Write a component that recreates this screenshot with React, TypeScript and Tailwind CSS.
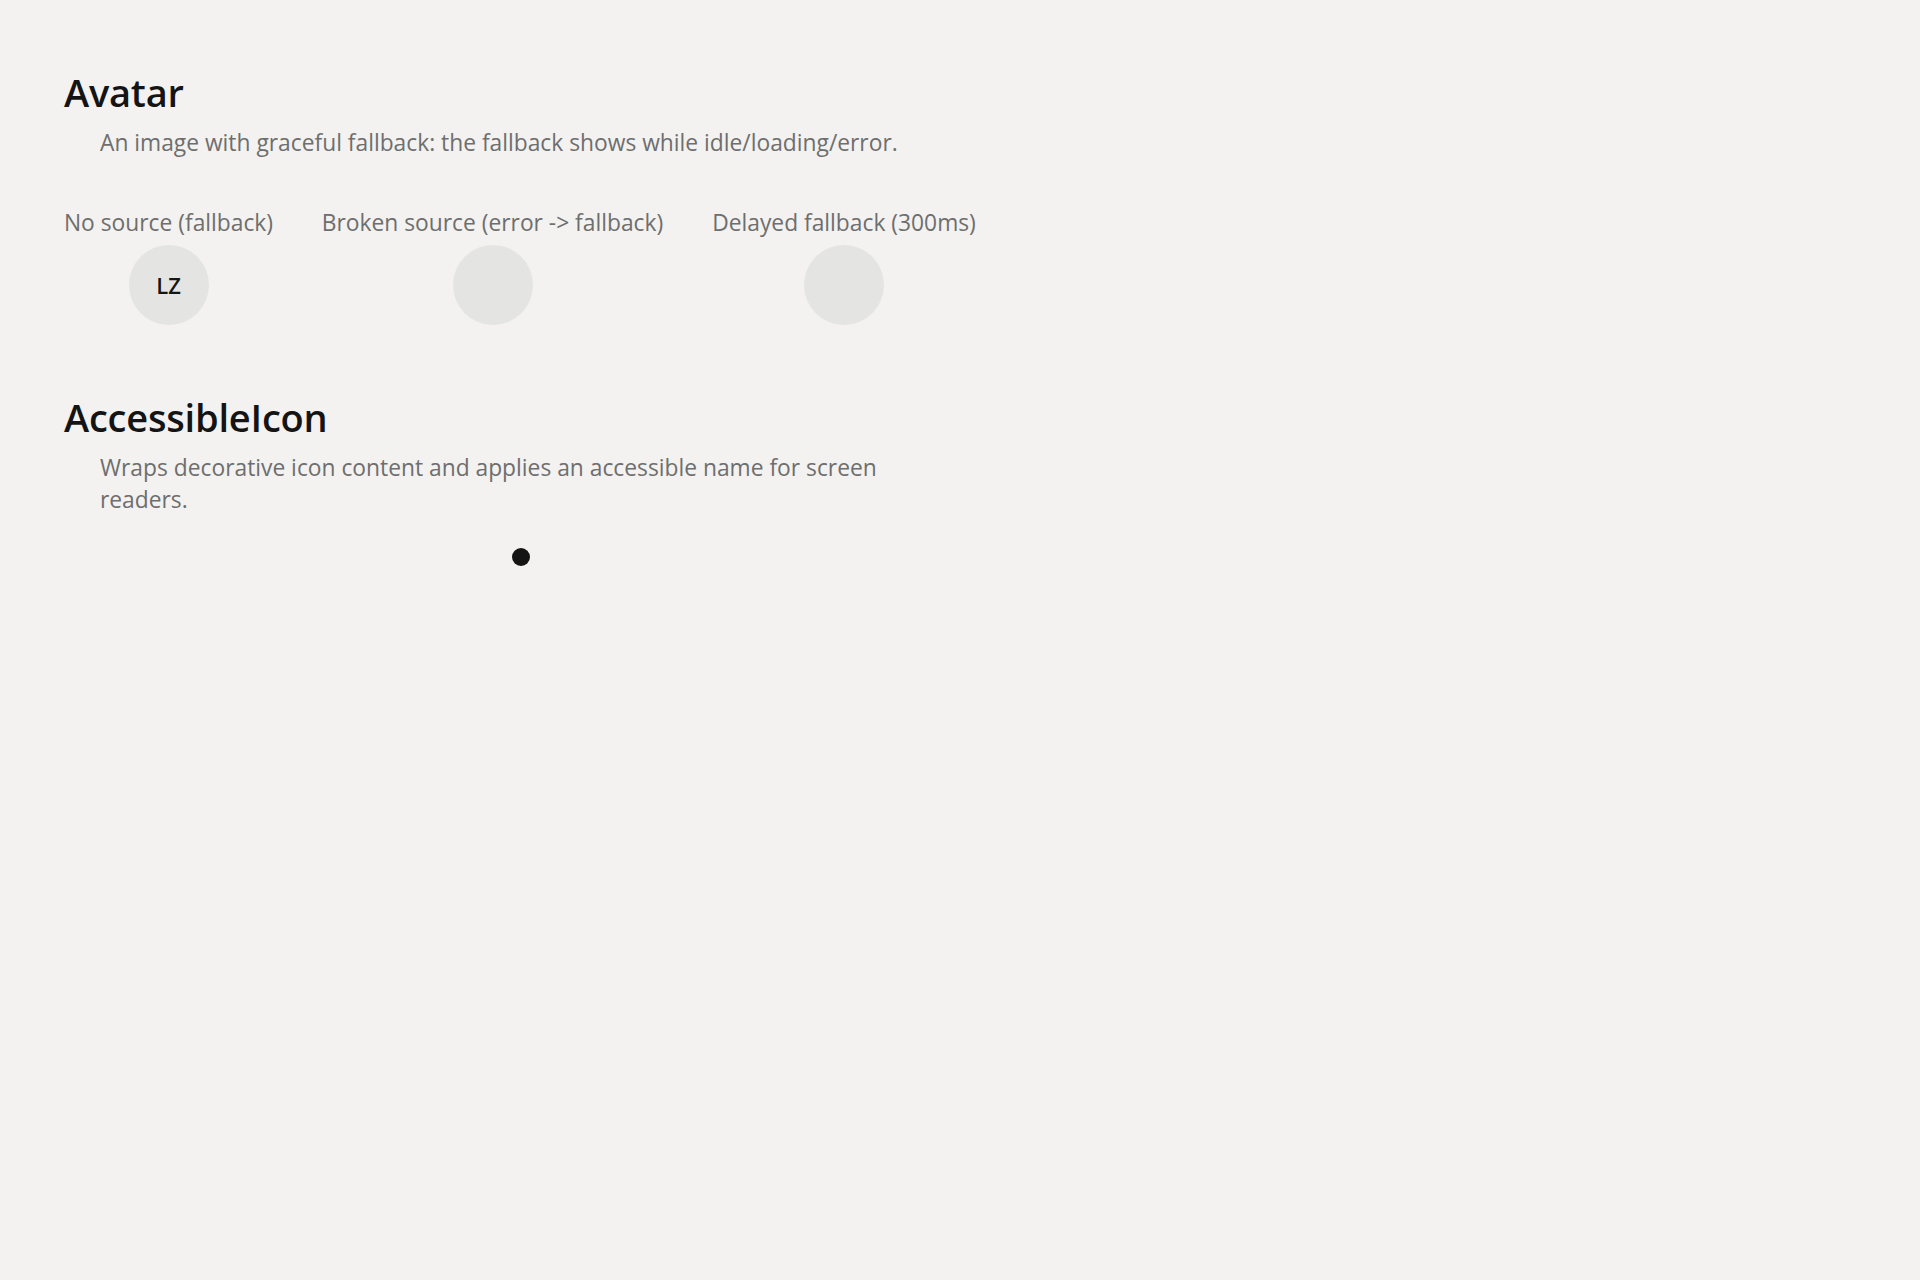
import React, { useEffect, useState } from 'react';

type AvatarProps = {
  src?: string;
  alt: string;
  fallback?: string;
  delayMs?: number;
};

const Avatar: React.FC<AvatarProps> = ({ src, alt, fallback, delayMs = 0 }) => {
  const [status, setStatus] = useState<'idle' | 'loading' | 'loaded' | 'error'>(src ? 'loading' : 'idle');
  const [canShowFallback, setCanShowFallback] = useState(delayMs === 0);

  useEffect(() => {
    if (delayMs === 0) return;
    const t = setTimeout(() => setCanShowFallback(true), delayMs);
    return () => clearTimeout(t);
  }, [delayMs]);

  return (
    <span className="inline-flex h-20 w-20 shrink-0 items-center justify-center overflow-hidden rounded-full bg-[#e4e4e3] select-none">
      {status !== 'loaded' && canShowFallback && fallback && (
        <span className="text-[22px] font-semibold leading-none text-[#151515]">{fallback}</span>
      )}
      {status !== 'loaded' && src && status !== 'error' && (
        <span className="hidden" data-alt={alt} onError={() => setStatus('error')} />
      )}
    </span>
  );
};

// Decorative icon with its accessible name kept out of the visual flow
const AccessibleIcon: React.FC<{ label: string; children: React.ReactNode }> = ({ label, children }) => (
  <span role="img" aria-label={label} className="inline-flex">
    <span aria-hidden="true">{children}</span>
  </span>
);

const Section: React.FC<{ title: string; description: string; children: React.ReactNode }> = ({ title, description, children }) => (
  <section>
    <h2 className="text-[38px] font-semibold leading-[46px] tracking-[-0.2px] text-[#141414]">{title}</h2>
    <p className="mx-[36px] mt-[12px] text-[22.8px] leading-[32px] text-[#6e6e6e]">{description}</p>
    {children}
  </section>
);

const demos = [
  { label: 'No source (fallback)', width: 'w-[209px]', src: undefined, fallback: 'LZ', delay: 0 },
  { label: 'Broken source (error -> fallback)', width: 'w-[343px]', src: 'broken.png', fallback: undefined, delay: 0 },
  { label: 'Delayed fallback (300ms)', width: 'w-[264px]', src: undefined, fallback: undefined, delay: 300 },
];

export default function App() {
  return (
    <div className="min-h-[1280px] bg-[#f3f2f0] font-['Open_Sans','Noto_Sans',sans-serif]">
      <main className="w-[913px] ml-[64px] pt-[69px]">
        <Section title="Avatar" description="An image with graceful fallback: the fallback shows while idle/loading/error.">
          <div className="mt-[49px] flex gap-[48px]">
            {demos.map(d => (
              <div key={d.label} className={`${d.width} flex flex-col items-center gap-[7px]`}>
                <span className="whitespace-nowrap text-[22.8px] leading-[30px] text-[#6e6e6e]">{d.label}</span>
                <Avatar src={d.src} alt="User" fallback={d.fallback} delayMs={d.delay} />
              </div>
            ))}
          </div>
        </Section>

        <div className="mt-[69px]">
          <Section title="AccessibleIcon" description="Wraps decorative icon content and applies an accessible name for screen readers.">
            <div className="mt-[32px] flex justify-center">
              <AccessibleIcon label="Status">
                <span className="block h-[18px] w-[18px] rounded-full bg-[#141414]" />
              </AccessibleIcon>
            </div>
          </Section>
        </div>
      </main>
    </div>
  );
}
